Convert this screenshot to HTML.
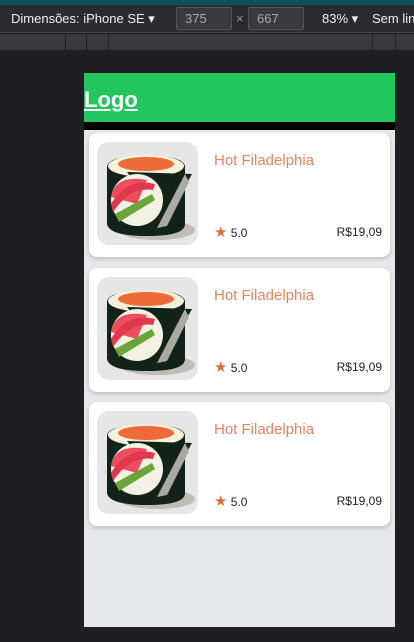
<!DOCTYPE html>
<html><head><meta charset="utf-8"><style>
*{margin:0;padding:0;box-sizing:border-box}
body{width:414px;height:642px;background:#1f1f22;font-family:"Liberation Sans",sans-serif;position:relative;overflow:hidden}
.top{position:absolute;left:0;top:0;width:414px;height:5px;background:#0d4f5a}
.bar{position:absolute;left:0;top:5px;width:414px;height:28px;background:#2b2b2e;border-bottom:1px solid #444;color:#eee;font-size:13px;overflow:hidden}
.bar span{position:absolute;top:6px;white-space:nowrap}
.inp{position:absolute;top:2px;height:23px;border:1px solid #555;background:#3a3a3d;color:#aaa;font-size:13px;padding:3px 8px;border-radius:2px}
.rul{position:absolute;left:0;top:34px;width:414px;height:16px;background:#3a3a3e}
.rul i{position:absolute;top:0;width:1px;height:16px;background:#222}
.vp{position:absolute;left:84px;top:73px;width:311px;height:554px;background:#e5e7eb}
.hd{height:49px;background:#22c55e;color:#fff;font-weight:bold;font-size:22px;text-decoration:underline;padding-top:14px}
.blk{height:8px;background:#000}
.card{position:absolute;left:5px;width:301px;height:124px;background:#fff;border-radius:8px;box-shadow:0 2px 4px rgba(0,0,0,.18)}
.img{position:absolute;left:8px;top:9px;width:101px;height:103px;background:#e6e6e6;border-radius:12px;overflow:hidden}
.t{position:absolute;left:125px;top:19px;color:#e2845f;font-size:15px}
.r{position:absolute;left:125px;top:90px;font-size:12px;color:#222}
.r b{color:#e06c3b;font-size:15px;font-weight:normal}
.p{position:absolute;right:8px;top:92px;font-size:12px;color:#222}
</style></head><body>
<div class="top"></div>
<div class="bar"><span style="left:11px">Dimensões: iPhone SE ▾</span>
<div class="inp" style="left:176px;width:56px">375</div><span style="left:236px;color:#999">×</span>
<div class="inp" style="left:248px;width:56px">667</div>
<span style="left:322px">83% ▾</span><span style="left:372px">Sem lin</span></div>
<div class="rul"><i style="left:65px"></i><i style="left:86px"></i><i style="left:108px"></i><i style="left:372px"></i><i style="left:395px"></i></div>
<div class="vp"><div class="hd">Logo</div><div class="blk"></div></div>
<svg width="0" height="0" style="position:absolute"><defs><g id="s">
<ellipse cx="60" cy="88" rx="38" ry="10" fill="#bdbdb5"/>
<path d="M10 25 Q10 14 50 14 Q88 14 88 25 L88 82 Q88 94 50 94 Q12 94 10 82 Z" fill="#14231a"/>
<ellipse cx="49" cy="24" rx="38" ry="11" fill="#f5f0d8"/>
<ellipse cx="49" cy="22" rx="28" ry="7" fill="#ef6a3a"/>
<path d="M30 30 L95 32 L62 90 L74 88 Z" fill="#14231a"/>
<path d="M88 32 L60 86 L70 84 L92 40Z" fill="#aaa9a2"/>
<circle cx="40" cy="58" r="26" fill="#f3f1e4"/>
<path d="M14 55 Q18 32 50 38 L40 62 Z" fill="#ee4d5f"/>
<path d="M18 72 L55 52 L58 58 L22 80Z" fill="#6aa53a"/>
<path d="M14 62 Q30 35 58 42 L56 48 Q34 44 16 70Z" fill="#e0394e"/>
</g></defs></svg>
<div class="card" style="top:133px;left:89px"><div class="img"><svg width="101" height="103"><use href="#s"/></svg></div><div class="t">Hot Filadelphia</div><div class="r"><b>★</b> 5.0</div><div class="p">R$19,09</div></div>
<div class="card" style="top:268px;left:89px"><div class="img"><svg width="101" height="103"><use href="#s"/></svg></div><div class="t">Hot Filadelphia</div><div class="r"><b>★</b> 5.0</div><div class="p">R$19,09</div></div>
<div class="card" style="top:402px;left:89px"><div class="img"><svg width="101" height="103"><use href="#s"/></svg></div><div class="t">Hot Filadelphia</div><div class="r"><b>★</b> 5.0</div><div class="p">R$19,09</div></div>
</body></html>
